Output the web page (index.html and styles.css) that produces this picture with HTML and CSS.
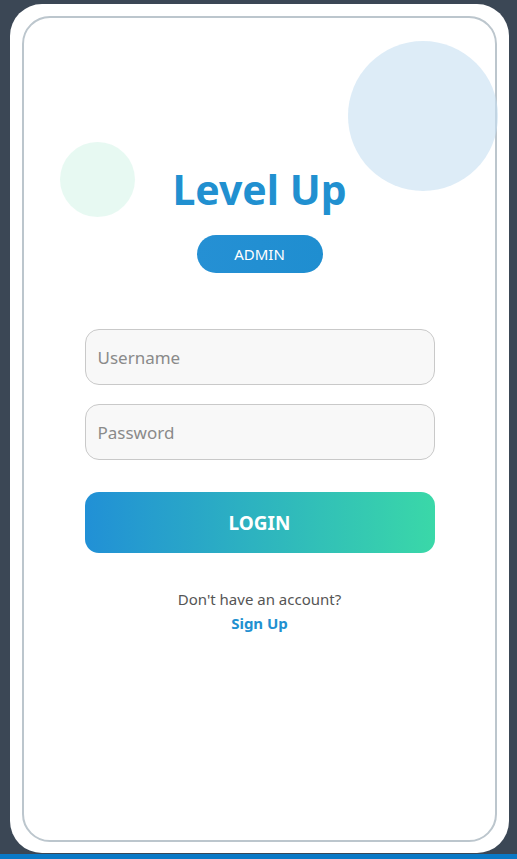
FILE: index.html
```html
<!DOCTYPE html>
<html>
<head>
<meta charset="utf-8">
<link rel="stylesheet" href="styles.css">
</head>
<body>
<div class="card">
  <div class="inner">
    <div class="bubble bubble-blue"></div>
    <div class="bubble bubble-green"></div>
    <div class="content">
      <h1 class="title">Level Up</h1>
      <div class="role">ADMIN</div>
      <form class="form">
        <input class="field" type="text" placeholder="Username">
        <input class="field" type="password" placeholder="Password">
        <button class="login" type="button">LOGIN</button>
      </form>
      <p class="hint">Don't have an account?</p>
      <a class="signup" href="#">Sign Up</a>
    </div>
  </div>
</div>
<div class="bar"></div>
</body>
</html>
```

FILE: styles.css
```css
* { box-sizing: border-box; }
html, body { margin: 0; padding: 0; }
body {
  background: #3b4755;
  font-family: "Noto Sans", "Open Sans", sans-serif;
  height: 859px;
  overflow: hidden;
  padding-top: 4px;
  display: flex;
  flex-direction: column;
}
.card {
  margin-left: 10px;
  width: 499px;
  height: 850px;
  background: #ffffff;
  border-radius: 32px;
  padding: 12px 12px 11px 12px;
}
.inner {
  position: relative;
  height: 100%;
  border: 2px solid #bcc6cd;
  border-radius: 28px;
}
.bubble {
  position: absolute;
  border-radius: 50%;
}
.bubble-blue {
  width: 150px;
  height: 150px;
  left: 324px;
  top: 23px;
  background: rgba(198, 224, 242, 0.6);
}
.bubble-green {
  width: 75px;
  height: 75px;
  left: 36px;
  top: 124px;
  background: rgba(208, 244, 230, 0.5);
}
.content {
  position: relative;
  display: flex;
  flex-direction: column;
  align-items: center;
  padding-top: 143px;
}
.title {
  margin: 0;
  font-size: 41px;
  font-weight: 700;
  line-height: 56px;
  color: #2190d0;
}
.role {
  margin-top: 18px;
  width: 126px;
  height: 38px;
  border-radius: 19px;
  background: linear-gradient(90deg, #2590d4, #1f8ed0);
  color: #ffffff;
  font-size: 15px;
  display: flex;
  align-items: center;
  justify-content: center;
}
.form {
  margin-top: 56px;
  width: 350px;
  display: flex;
  flex-direction: column;
  gap: 19px;
}
.field {
  height: 56px;
  border: 1.5px solid #c9c9c9;
  border-radius: 14px;
  background: #f8f8f8;
  padding: 0 12px;
  font-family: inherit;
  font-size: 17px;
  color: #333;
  outline: none;
}
.field::placeholder { color: #8a8a8a; }
.login {
  margin-top: 13px;
  height: 61px;
  border: none;
  border-radius: 14px;
  background: linear-gradient(90deg, #2190d6, #3ad8a8);
  color: #ffffff;
  font-family: inherit;
  font-size: 19px;
  font-weight: 700;
}
.hint {
  margin: 35px 0 0;
  font-size: 15px;
  color: #555555;
  line-height: 22px;
}
.signup {
  margin-top: 2px;
  font-size: 15px;
  font-weight: 700;
  color: #2190d0;
  text-decoration: none;
  line-height: 22px;
}
.bar {
  margin-top: 1px;
  height: 5px;
  background: #0a79c6;
}
```
